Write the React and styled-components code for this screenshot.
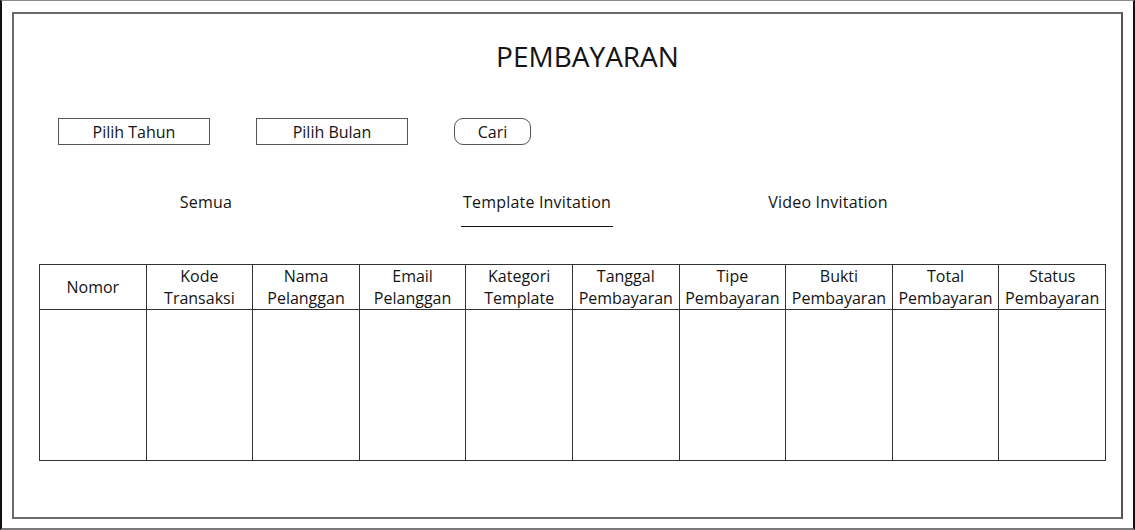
import React from "react";
import styled, { createGlobalStyle } from "styled-components";

const Global = createGlobalStyle`
  html, body { margin: 0; padding: 0; background: #fff; }
  body { font-family: "Open Sans", "Noto Sans", sans-serif; color: #141414; }
`;

const Outer = styled.div`
  box-sizing: border-box;
  width: 1135px;
  height: 530px;
  border-top: 1px solid #8a8a8a;
  border-bottom: 2px solid #7a7a7a;
  border-left: 2px solid #111;
  border-right: 2px solid #111;
  padding: 11px 11px 9px 10px;
  background: #fff;
`;

const Inner = styled.div`
  box-sizing: border-box;
  width: 1111px;
  height: 507px;
  border: 2px solid #6a6a6a;
  border-right-color: #555;
  display: flex;
  flex-direction: column;
`;

const Title = styled.h1`
  margin: 25px 0 0 0;
  text-align: center;
  font-weight: 400;
  font-size: 28px;
  line-height: 34px;
  padding-left: 40px;
`;

const Toolbar = styled.div`
  display: flex;
  align-items: center;
  gap: 46px;
  margin-top: 45px;
  padding-left: 44px;
`;

const Button = styled.div`
  box-sizing: border-box;
  width: ${(p) => p.$w}px;
  height: 27px;
  border: 1px solid #555;
  border-radius: ${(p) => (p.$round ? "9px" : "0")};
  display: flex;
  align-items: center;
  justify-content: center;
  font-size: 16px;
  color: #141414;
`;

const Tabs = styled.div`
  display: flex;
  margin-top: 45px;
`;

const Tab = styled.div`
  box-sizing: border-box;
  width: 152px;
  margin-left: ${(p) => p.$ml}px;
  text-align: center;
  font-size: 16px;
  line-height: 22px;
  padding-top: 1px;
  padding-bottom: 13px;
  white-space: nowrap;
  letter-spacing: 0.2px;
  border-bottom: 1px solid ${(p) => (p.$active ? "#111" : "transparent")};
`;

const Table = styled.table`
  border-collapse: collapse;
  margin: 37px 0 0 25px;
  width: 1067px;
  table-layout: fixed;
  font-size: 16px;
`;

const Th = styled.th`
  border: 1px solid #333;
  font-weight: 400;
  height: 44px;
  padding: 0;
  line-height: 22px;
  text-align: center;
  vertical-align: middle;
  white-space: nowrap;
  overflow: hidden;
`;

const Td = styled.td`
  border: 1px solid #333;
  height: 150px;
  padding: 0;
`;

const headers = [
  ["Nomor"],
  ["Kode", "Transaksi"],
  ["Nama", "Pelanggan"],
  ["Email", "Pelanggan"],
  ["Kategori", "Template"],
  ["Tanggal", "Pembayaran"],
  ["Tipe", "Pembayaran"],
  ["Bukti", "Pembayaran"],
  ["Total", "Pembayaran"],
  ["Status", "Pembayaran"],
];

export default function App() {
  return (
    <>
      <Global />
      <Outer>
        <Inner>
          <Title>PEMBAYARAN</Title>
          <Toolbar>
            <Button $w={152}>Pilih Tahun</Button>
            <Button $w={152}>Pilih Bulan</Button>
            <Button $w={77} $round>Cari</Button>
          </Toolbar>
          <Tabs>
            <Tab $ml={116}>Semua</Tab>
            <Tab $ml={179} $active>Template Invitation</Tab>
            <Tab $ml={139}>Video Invitation</Tab>
          </Tabs>
          <Table>
            <thead>
              <tr>
                {headers.map((h, i) => (
                  <Th key={i}>
                    {h.map((l, j) => (
                      <div key={j}>{l}</div>
                    ))}
                  </Th>
                ))}
              </tr>
            </thead>
            <tbody>
              <tr>
                {headers.map((_, i) => (
                  <Td key={i} />
                ))}
              </tr>
            </tbody>
          </Table>
        </Inner>
      </Outer>
    </>
  );
}
